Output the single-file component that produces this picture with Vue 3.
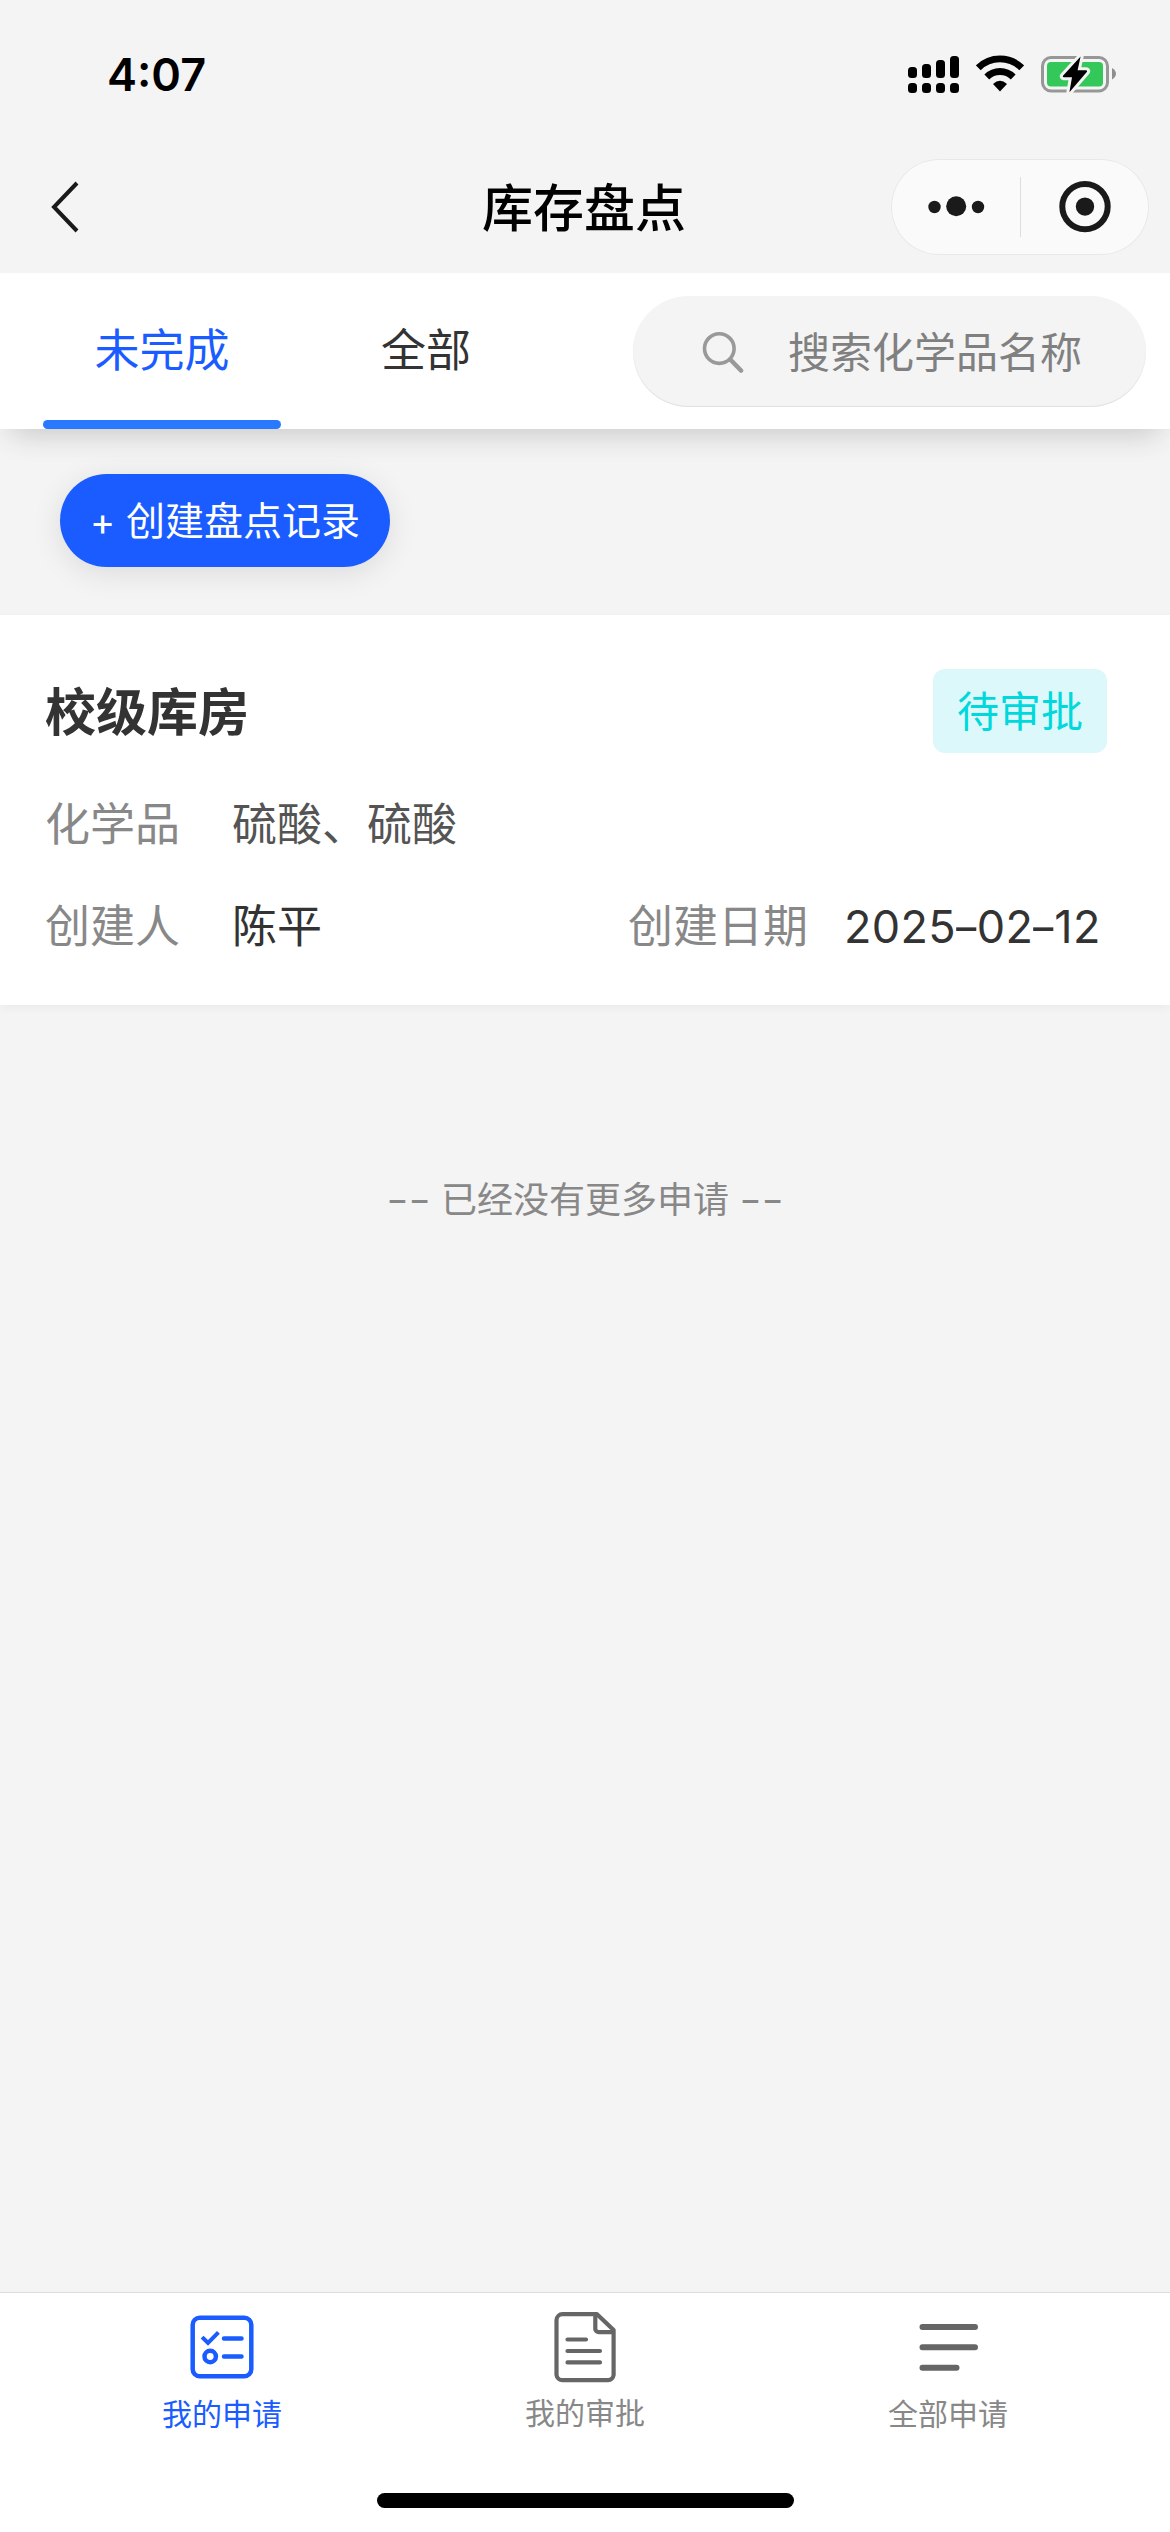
<script setup>
import { ref } from 'vue'

const tabs = ['未完成', '全部']
const activeTab = ref(0)
const record = {
  title: '校级库房',
  status: '待审批',
  chemicals: '硫酸、硫酸',
  creator: '陈平',
  date: ['2025', '02', '12'],
}
</script>

<template>
  <div class="page">
    <header class="top">
      <div class="status-bar">
        <span class="clock">4:07</span>
        <div class="status-icons">
          <svg class="signal" width="51" height="38" viewBox="0 0 51 38">
            <rect x="0" y="12" width="9" height="11" rx="3.5" />
            <rect x="14" y="9" width="9" height="14" rx="3.5" />
            <rect x="28" y="5" width="9" height="18" rx="3.5" />
            <rect x="42" y="1" width="9" height="22" rx="3.5" />
            <rect x="0" y="28" width="9" height="10" rx="3.5" />
            <rect x="14" y="28" width="9" height="10" rx="3.5" />
            <rect x="28" y="28" width="9" height="10" rx="3.5" />
            <rect x="42" y="28" width="9" height="10" rx="3.5" />
          </svg>
          <svg class="wifi" width="48" height="38" viewBox="0 0 48 38">
            <path d="M2.300 12.800A31 31 0 0 1 45.700 12.800" fill="none" stroke="#000" stroke-width="6.800" />
            <path d="M10.800 22A18.600 18.600 0 0 1 37.200 22" fill="none" stroke="#000" stroke-width="6.800" />
            <path d="M24 36.400L17 29Q24 22.400 31 29Z" />
          </svg>
          <svg class="battery" width="75" height="38" viewBox="0 0 75 38">
            <rect x="1.5" y="2.5" width="65" height="33.5" rx="8.5" fill="none" stroke="#979797" stroke-width="3" />
            <rect x="6" y="7" width="56" height="24.5" rx="4" fill="#34c759" />
            <path d="M71 13Q75 15.500 75 18.800Q75 22 71 24.500Z" fill="#8e8e8e" />
            <path class="bolt" d="M39.600 1.600L22 20.700Q21.300 22 22.800 22.200H31L28.400 37.200L46 16.700Q46.700 15.200 45 15.200H36.600Z" stroke="#f4f4f4" stroke-width="6" stroke-linejoin="round" paint-order="stroke" />
          </svg>
        </div>
      </div>
      <div class="nav">
        <svg class="back" width="30" height="54" viewBox="0 0 30 54">
          <path d="M27 3L4 27L27 51" fill="none" stroke="#1a1a1a" stroke-width="4" />
        </svg>
        <h1 class="nav-title">库存盘点</h1>
        <div class="capsule">
          <svg width="258" height="96" viewBox="0 0 258 96" fill="#1a1a1a">
            <circle cx="43.500" cy="48" r="6.200" />
            <circle cx="65.200" cy="47.200" r="10" />
            <circle cx="87" cy="48" r="6.200" />
            <rect x="129" y="18" width="1" height="60" fill="#dedede" />
            <circle cx="194" cy="47.600" r="22.700" fill="none" stroke="#1a1a1a" stroke-width="6" />
            <circle cx="194" cy="47.600" r="9.200" />
          </svg>
        </div>
      </div>
    </header>

    <section class="filter">
      <div class="tabs">
        <div
          v-for="(t, i) in tabs"
          :key="t"
          class="tab"
          :class="{ active: i === activeTab }"
          @click="activeTab = i"
        >
          {{ t }}
        </div>
      </div>
      <div class="search">
        <svg width="42" height="42" viewBox="0 0 42 42" fill="none" stroke="#999" stroke-width="3.600">
          <circle cx="17.300" cy="17.600" r="14.800" />
          <path d="M28.300 28.500L39 39.500" stroke-width="4.600" stroke-linecap="round" />
        </svg>
        <span>搜索化学品名称</span>
      </div>
    </section>

    <main class="content">
      <button class="create"><span class="plus">+</span>创建盘点记录</button>

      <article class="card">
        <div class="card-head">
          <h2>{{ record.title }}</h2>
          <span class="badge">{{ record.status }}</span>
        </div>
        <div class="row">
          <span class="label">化学品</span>
          <span class="value soft">{{ record.chemicals }}</span>
        </div>
        <div class="row">
          <span class="label">创建人</span>
          <span class="value">{{ record.creator }}</span>
          <span class="label date-label">创建日期</span>
          <span class="date"><template v-for="(p, i) in record.date" :key="i"><span v-if="i" class="dash">-</span>{{ p }}</template></span>
        </div>
      </article>

      <p class="end"><span class="rule">--</span><span>已经没有更多申请</span><span class="rule">--</span></p>
    </main>

    <footer class="tabbar">
      <div class="items">
        <div class="item on">
          <svg width="72" height="72" viewBox="0 0 72 72" fill="none" stroke="#1a5cff" stroke-width="4.500">
            <rect x="6.700" y="6.700" width="58.600" height="58.600" rx="7" />
            <path d="M17.500 27.500L22 32L31 22.800" stroke-linecap="square" stroke-linejoin="miter" stroke-width="4" />
            <circle cx="24.200" cy="45.500" r="5.700" />
            <path d="M38 27.500H55.500M38 45.500H55.500" stroke-linecap="round" />
          </svg>
          <span>我的申请</span>
        </div>
        <div class="item">
          <svg width="72" height="72" viewBox="0 0 72 72" fill="none" stroke="#666" stroke-width="4.200" stroke-linejoin="round">
            <path d="M48 3.200H13.500A6 6 0 0 0 7.500 9V64A6 6 0 0 0 13.500 69.200H59A6 6 0 0 0 64.600 64V19Z" />
            <path d="M46.300 3.500V18A3.500 3.500 0 0 0 49.800 21.200H64" />
            <path d="M18.500 28.500H37M18.500 40H51M18.500 51.400H51" stroke-linecap="round" />
          </svg>
          <span class="raised">我的审批</span>
        </div>
        <div class="item">
          <svg width="72" height="72" viewBox="0 0 72 72" fill="none" stroke="#666" stroke-width="6" stroke-linecap="round">
            <path d="M10.500 16H63M10.500 36.300H63M10.500 56.700H44.500" />
          </svg>
          <span>全部申请</span>
        </div>
      </div>
      <div class="home-indicator"></div>
    </footer>
  </div>
</template>

<style>
body {
  margin: 0;
  background: #f4f4f4;
}
</style>

<style scoped>
.page {
  display: flex;
  flex-direction: column;
  width: 1170px;
  height: 2532px;
  overflow: hidden;
  background: #f4f4f4;
  color: #333;
  font-family: Inter, "Noto Sans CJK SC", sans-serif;
  font-size: 45px;
}
.top {
  height: 273px;
}
.status-bar {
  display: flex;
  justify-content: space-between;
  align-items: center;
  height: 149px;
  box-sizing: border-box;
  padding: 0 54px 0 107px;
}
.clock {
  color: #000;
  font-size: 45px;
  font-weight: 600;
  letter-spacing: 0;
  line-height: 60px;
}
.status-icons {
  display: flex;
  align-items: center;
  padding-bottom: 1px;
}
.wifi {
  margin: 0 17px;
}
.nav {
  display: flex;
  justify-content: space-between;
  align-items: center;
  height: 116px;
  box-sizing: border-box;
  padding: 0 21px 0 50px;
}
.nav-title {
  flex: 1;
  margin: 0 0 0 197px;
  padding-top: 4px;
  color: #000;
  text-align: center;
  font-size: 51px;
  font-weight: 500;
  line-height: 70px;
}
.capsule {
  box-sizing: border-box;
  width: 258px;
  height: 96px;
  border-radius: 48px;
  background: #fafafa;
  box-shadow: inset 0 0 0 1px #e8e8e8;
}
.capsule svg {
  display: block;
}
.filter {
  display: flex;
  justify-content: space-between;
  height: 156px;
  box-sizing: border-box;
  padding: 0 24px 0 43px;
  background: #fff;
  box-shadow: 0 16px 28px -12px rgba(0, 0, 0, 0.17), 0 6px 36px rgba(0, 0, 0, 0.03);
  clip-path: inset(0 0 -60px 0);
}
.tabs {
  display: flex;
  gap: 26px;
}
.tab {
  width: 238px;
  height: 156px;
  text-align: center;
  line-height: 156px;
}
.tab.active {
  color: #1a5cff;
  position: relative;
}
.tab.active::after {
  content: "";
  position: absolute;
  left: 0;
  right: 0;
  bottom: 0;
  height: 9px;
  border-radius: 5px;
  background: #2979ff;
}
.search {
  display: flex;
  align-items: center;
  gap: 44px;
  width: 513px;
  height: 111px;
  margin-top: 23px;
  box-sizing: border-box;
  padding-left: 69px;
  border-radius: 56px;
  background: #f4f4f4;
  box-shadow: inset 0 -1px 1px #e0e0e0;
  color: #808080;
  font-size: 42px;
}
.search span {
  padding-bottom: 4px;
}
.content {
  flex: 1;
}
.create {
  display: block;
  width: 330px;
  height: 93px;
  margin: 45px 0 48px 60px;
  padding: 0 0 0 30px;
  border: 0;
  border-radius: 47px;
  background: #1a5cff;
  box-shadow: 0 6px 30px rgba(0, 0, 0, 0.1);
  color: #fff;
  font: inherit;
  font-size: 39px;
  line-height: 92px;
  text-align: left;
  white-space: nowrap;
}
.plus {
  display: inline-block;
  width: 36px;
  font-size: 38px;
}
.card {
  height: 390px;
  box-sizing: border-box;
  padding: 54px 63px 0 45px;
  background: #fff;
  box-shadow: 0 3px 9px rgba(0, 0, 0, 0.04);
}
.card-head {
  display: flex;
  justify-content: space-between;
  align-items: center;
  height: 84px;
  margin-bottom: 21px;
}
.card-head h2 {
  margin: 0;
  padding-bottom: 5px;
  font-size: 51px;
  font-weight: 700;
}
.badge {
  width: 174px;
  height: 84px;
  border-radius: 12px;
  background: #dcf8fa;
  color: #00d8dc;
  font-size: 42px;
  line-height: 85px;
  text-align: center;
}
.row {
  display: flex;
  height: 102px;
  line-height: 102px;
}
.label {
  width: 187px;
  color: #888;
}
.value {
  flex: 1;
}
.value.soft {
  color: #545454;
}
.date-label {
  width: 216px;
}
.date {
  width: 263px;
  letter-spacing: 0.3px;
  white-space: nowrap;
}
.dash {
  display: inline-block;
  transform: scaleX(1.4);
}
.end {
  display: flex;
  justify-content: center;
  gap: 16px;
  margin: 168px 0 0;
  color: #888;
  font-size: 36px;
  line-height: 54px;
}
.rule {
  transform: scaleX(1.35);
}
.tabbar {
  display: flex;
  flex-direction: column;
  align-items: center;
  justify-content: space-between;
  height: 240px;
  box-sizing: border-box;
  padding: 18px 0 24px;
  border-top: 1px solid #dcdcdc;
  background: #fff;
}
.items {
  display: flex;
  width: 1089px;
}
.item {
  flex: 1;
  display: flex;
  flex-direction: column;
  align-items: center;
  color: #888;
  font-size: 30px;
  line-height: 44px;
}
.item span {
  margin-top: 9px;
}
.item .raised {
  margin-top: 8px;
}
.item.on {
  color: #1a5cff;
}
.home-indicator {
  width: 417px;
  height: 15px;
  border-radius: 8px;
  background: #000;
}
</style>
